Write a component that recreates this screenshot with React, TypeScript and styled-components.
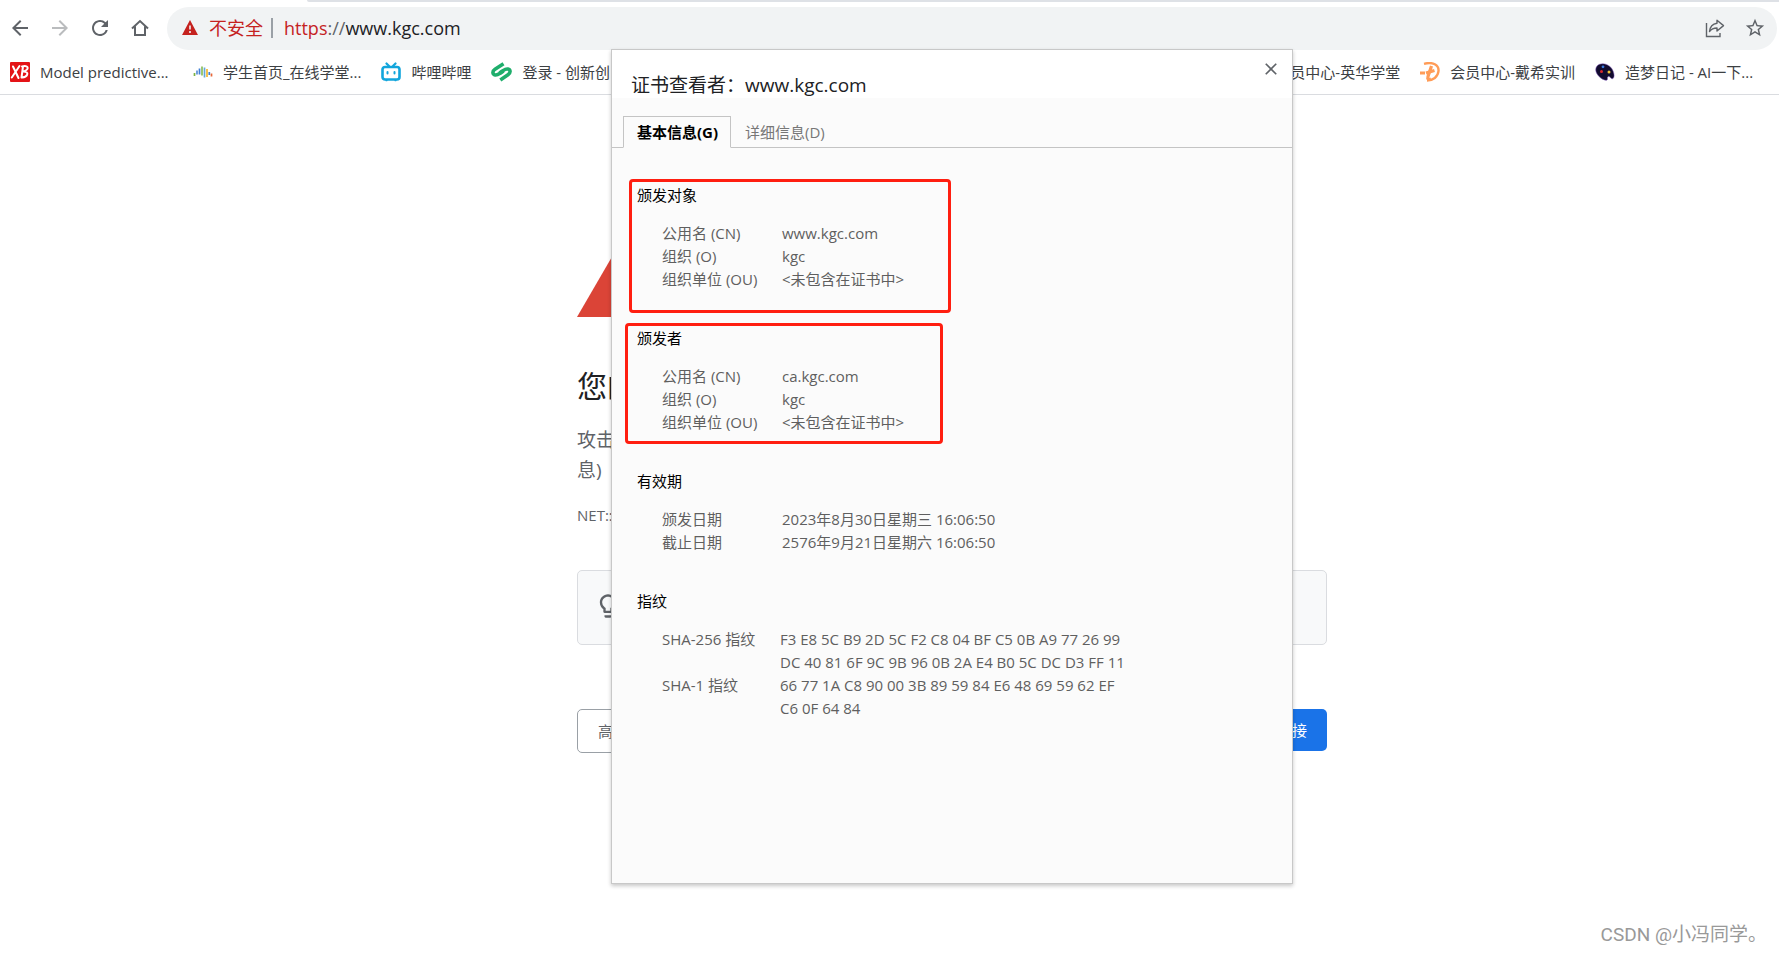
import React from "react";
import styled, { createGlobalStyle } from "styled-components";
import { MdArrowBack, MdArrowForward, MdRefresh, MdStarBorder, MdOutlineLightbulb, MdClose } from "react-icons/md";

const GlobalStyle = createGlobalStyle`
  * { box-sizing: border-box; }
  body {
    margin: 0;
    background: #fff;
    color: #202124;
    font-family: "Open Sans", "Noto Sans CJK SC", sans-serif;
    font-size: 15px;
    line-height: 22px;
    overflow-x: hidden;
  }
  button { font: inherit; cursor: pointer; }
  h1, h2, p, dl, dd { margin: 0; }
`;

const Page = styled.div`
  position: relative;
  min-height: 100vh;
  overflow: hidden;
`;

const TabStrip = styled.div`
  height: 2px;
  margin-left: 307px;
  background: #dee1e6;
  border-bottom-left-radius: 4px;
`;

const Toolbar = styled.header`
  display: flex;
  align-items: flex-start;
  padding: 5px 2px 0 0;
`;

const NavButton = styled.button<{ $dim?: boolean }>`
  display: flex;
  align-items: center;
  justify-content: center;
  width: 40px;
  height: 42px;
  padding: 0;
  border: 0;
  background: none;
  color: ${(p) => (p.$dim ? "#babcbe" : "#5f6368")};
  svg { display: block; }
`;

const Omnibox = styled.div`
  display: flex;
  flex: 1;
  align-items: center;
  height: 43px;
  margin-left: 7px;
  padding: 0 2px 2px 15px;
  border-radius: 22px;
  background: #f1f3f4;
`;

const Unsafe = styled.button`
  display: flex;
  align-items: center;
  gap: 11px;
  padding: 0 8px 0 0;
  border: 0;
  background: none;
  color: #c5221f;
  font-size: 18px;
  line-height: 24px;
`;

const Divider = styled.span`
  width: 2px;
  height: 20px;
  margin-right: 11px;
  background: #9aa0a6;
`;

const Address = styled.div`
  flex: 1;
  font-size: 18px;
  line-height: 24px;
  color: #202124;
  i { font-style: normal; color: #5f6368; }
  b { font-weight: 400; color: #c5221f; }
`;

const Bookmarks = styled.nav`
  display: flex;
  gap: 20px;
  height: 45px;
  padding: 0 21px 0 10px;
  align-items: center;
  border-bottom: 1px solid #dadce0;
`;

const Bookmark = styled.a<{ $push?: boolean }>`
  display: flex;
  gap: 10px;
  align-items: center;
  margin-left: ${(p) => (p.$push ? "auto" : "0")};
  color: #3c4043;
  text-decoration: none;
  white-space: nowrap;
  svg { display: block; }
`;

const BookmarkLabel = styled.span<{ $long?: boolean }>`
  min-width: ${(p) => (p.$long ? "133px" : "0")};
`;

const Main = styled.main`
  display: flex;
  justify-content: center;
  padding: 160px 0 0 125px;
`;

const Warning = styled.section`
  width: 750px;
  color: #5f6368;
`;

const WarningTitle = styled.h1`
  margin-top: 49px;
  color: #202124;
  font-size: 30px;
  font-weight: 400;
  line-height: 40px;
`;

const Lead = styled.p`
  margin-top: 19px;
  font-size: 19px;
  line-height: 30px;
`;

const ErrorCode = styled.p`
  margin-top: 19px;
`;

const Tip = styled.div`
  display: flex;
  align-items: center;
  height: 75px;
  margin-top: 44px;
  padding: 0 16px 4px;
  border: 1px solid #dadce0;
  border-radius: 5px;
  background: #f8f9fa;
`;

const Actions = styled.div`
  display: flex;
  justify-content: space-between;
  align-items: flex-start;
  margin-top: 64px;
`;

const Action = styled.button<{ $primary?: boolean }>`
  height: ${(p) => (p.$primary ? "42px" : "44px")};
  min-width: 72px;
  padding: 0 20px;
  border: ${(p) => (p.$primary ? "0" : "1px solid #9aa0a6")};
  border-radius: 5px;
  background: ${(p) => (p.$primary ? "#1a73e8" : "#fff")};
  color: ${(p) => (p.$primary ? "#fff" : "#5f6368")};
  text-align: ${(p) => (p.$primary ? "right" : "left")};
`;

const Overlay = styled.div`
  position: absolute;
  inset: 0;
  display: flex;
  justify-content: center;
  align-items: flex-start;
  padding: 49px 0 0 125px;
`;

const Dialog = styled.section`
  width: 682px;
  min-height: 835px;
  border: 1px solid #c8c8c8;
  background: #fbfbfb;
  box-shadow: 0 2px 4px rgba(0, 0, 0, 0.22);
`;

const DialogHead = styled.div`
  display: flex;
  justify-content: space-between;
  align-items: flex-start;
  height: 48px;
  padding: 0 11px 0 19px;
  background: #fff;
`;

const DialogTitle = styled.h2`
  padding-top: 22px;
  font-size: 19px;
  font-weight: 400;
  line-height: 26px;
`;

const CloseButton = styled.button`
  display: flex;
  margin-top: 9px;
  padding: 0;
  border: 0;
  background: none;
  color: #5f6368;
`;

const Tabs = styled.div`
  display: flex;
  align-items: flex-end;
  margin-top: 18px;
  padding-left: 11px;
  border-bottom: 1px solid #c4c4c4;
`;

const Tab = styled.button<{ $active?: boolean }>`
  height: 32px;
  margin-bottom: -1px;
  padding: 0 12px 0 13px;
  border: 1px solid ${(p) => (p.$active ? "#c4c4c4" : "transparent")};
  border-bottom-color: ${(p) => (p.$active ? "#fbfbfb" : "transparent")};
  background: ${(p) => (p.$active ? "#fbfbfb" : "none")};
  color: ${(p) => (p.$active ? "#000" : "#777")};
  font-weight: ${(p) => (p.$active ? 700 : 400)};
`;

const Details = styled.div`
  display: flex;
  flex-direction: column;
  gap: 36px;
  padding: 36px 25px;
`;

const Group = styled.section`
  position: relative;
`;

const GroupTitle = styled.h2`
  margin-bottom: 16px;
  color: #000;
  font-size: 15px;
  font-weight: 400;
`;

const Fields = styled.dl<{ $wide?: boolean }>`
  display: grid;
  grid-template-columns: ${(p) => (p.$wide ? "118px" : "120px")} 345px;
  margin-left: 25px;
  color: #5f5f5f;
  line-height: 23px;
`;

const Mark = styled.span<{ $inset: string }>`
  position: absolute;
  inset: ${(p) => p.$inset};
  border: 3px solid #ff1e10;
  border-radius: 4px;
  pointer-events: none;
`;

const Watermark = styled.div`
  position: absolute;
  right: 12px;
  bottom: 5px;
  color: #999;
  font-family: Roboto, "Noto Sans CJK SC", sans-serif;
  font-size: 19px;
  line-height: 26px;
`;

const HomeIcon = () => (
  <svg width="18" height="18" viewBox="0 0 18 18" fill="none" stroke="#5f6368" strokeWidth="2">
    <path d="M1 9.4 9 2l8 7.4M4 7.5V16h10V7.5" />
  </svg>
);

const AlertIcon = () => (
  <svg width="16" height="15" viewBox="0 0 16 15">
    <path d="M8 0 16 15H0Z" fill="#c5221f" />
    <path d="M8 5.5v4M8 11v2" stroke="#f1f3f4" strokeWidth="1.6" />
  </svg>
);

const ShareIcon = () => (
  <svg width="20" height="20" viewBox="0 0 20 20" fill="none" stroke="#5f6368" strokeWidth="1.4">
    <path d="M1.5 5v13.5h13.5V15" />
    <path d="M12 2.2 18.5 7.6 12 13V10c-3.6 0-5.7 1-7.500 3.500C5 9 7.500 5.800 12 5.200Z" strokeLinejoin="round" />
  </svg>
);

const XbLogo = () => (
  <svg width="20" height="20" viewBox="0 0 20 20">
    <rect width="20" height="20" rx="1" fill="#e41417" />
    <g fill="none" stroke="#fff" strokeWidth="2" strokeLinecap="round">
      <path d="M3 4.500 8.500 16M9.500 4 1.800 15.500" />
      <path d="M13 4.500 11.500 15.500M12 4.500c4-1.500 7 .5 5 3-1 1.300-2.500 1.800-4 2 3-.2 5 1 4.200 3.200-.8 2.200-3.200 2.900-5.700 2.800" />
    </g>
  </svg>
);

const WaveLogo = () => (
  <svg width="20" height="20" viewBox="0 0 20 20" strokeWidth="1.7">
    <path d="M1.500 11v3" stroke="#7cb342" />
    <path d="M4 8.500v4" stroke="#5a8fd8" />
    <path d="M6.500 6.500v6" stroke="#3f7fd6" />
    <path d="M9 4.500v9" stroke="#8cbf5a" />
    <path d="M11.500 5.500v10" stroke="#65a9d8" />
    <path d="M14 7v8" stroke="#f5b62e" />
    <path d="M16.300 10v3" stroke="#3f7fd6" />
    <path d="M18.500 11.500v3" stroke="#e8683a" />
  </svg>
);

const BiliLogo = () => (
  <svg width="20" height="20" viewBox="0 0 20 20" fill="none" stroke="#12a5dc" strokeLinecap="round">
    <rect x="1.500" y="5" width="17" height="12.500" rx="2.500" strokeWidth="2.6" />
    <path d="M5.500 1.500 8 4M14.500 1.500 12 4" strokeWidth="2.2" />
    <path d="M6.500 10v1.500M13.500 10v1.500" strokeWidth="2" />
    <path d="M5 18.600h1M14 18.600h1" strokeWidth="1.4" />
  </svg>
);

const LinkLogo = () => (
  <svg width="21" height="20" viewBox="0 0 21 20" fill="none" stroke="#1fae6c" strokeWidth="3.6">
    <path d="M12.500 1.800 4 7.300c-3 2-2.600 5 .2 5.600 2 .4 3.300-.6 5.500-2L12.500 9" />
    <path d="M9.300 18 17 12.700c3-2 2.600-5-.2-5.600-2-.4-3.300.6-5.500 2L8.500 11" />
  </svg>
);

const CoinLogo = () => (
  <svg width="20" height="20" viewBox="0 0 20 20" fill="none" stroke="#ff9c57">
    <path d="M4 1.800c9-2.300 15 1.200 14.500 7.200-.5 6-5.500 9.500-11.500 9.500" strokeWidth="2.400" />
    <path d="M11.500 4 8 14.500c-.8 2.500.5 3.500 3 2.500" strokeWidth="3.2" />
    <path d="M0 11h5M6 11l8.500-2.500" strokeWidth="3.2" />
  </svg>
);

const PaletteLogo = () => (
  <svg width="20" height="20" viewBox="0 0 20 20">
    <path
      d="M2 4C5 .5 12 1 16 5.500c2.500 3 4 8 2.500 10.500-1 1.500-2.500.5-3.200-.5-1-1.500-3-1-2.800.8.200 2-1 2.500-3 1.700C4 16-2 9 2 4Z"
      fill="#120b2e"
      stroke="#8a63c9"
      strokeWidth=".5"
    />
    <circle cx="8" cy="4.800" r="1.400" fill="#3a7be0" />
    <circle cx="6.500" cy="9.500" r="1.500" fill="#d8262c" />
    <circle cx="14" cy="10" r="1.500" fill="#f2c335" />
  </svg>
);

const DangerMark = styled.svg`
  display: block;
`;

const DangerIcon = () => (
  <DangerMark width="72" height="62" viewBox="0 0 72 62">
    <path d="M36 0 72 62H0Z" fill="#db4437" />
    <path d="M37 22v18M37 46v5" stroke="#fff" strokeWidth="4" />
  </DangerMark>
);

type Field = [string, React.ReactNode];
type GroupData = { title: string; mark?: string; wide?: boolean; fields: Field[] };

const groups: GroupData[] = [
  {
    title: "颁发对象",
    mark: "-5px 316px -22px -8px",
    fields: [
      ["公用名 (CN)", "www.kgc.com"],
      ["组织 (O)", "kgc"],
      ["组织单位 (OU)", "<未包含在证书中>"],
    ],
  },
  {
    title: "颁发者",
    mark: "-4px 324px -10px -12px",
    fields: [
      ["公用名 (CN)", "ca.kgc.com"],
      ["组织 (O)", "kgc"],
      ["组织单位 (OU)", "<未包含在证书中>"],
    ],
  },
  {
    title: "有效期",
    fields: [
      ["颁发日期", "2023年8月30日星期三 16:06:50"],
      ["截止日期", "2576年9月21日星期六 16:06:50"],
    ],
  },
  {
    title: "指纹",
    wide: true,
    fields: [
      ["SHA-256 指纹", <>F3 E8 5C B9 2D 5C F2 C8 04 BF C5 0B A9 77 26 99<br />DC 40 81 6F 9C 9B 96 0B 2A E4 B0 5C DC D3 FF 11</>],
      ["SHA-1 指纹", <>66 77 1A C8 90 00 3B 89 59 84 E6 48 69 59 62 EF<br />C6 0F 64 84</>],
    ],
  },
];

const bookmarks = [
  { label: "Model predictive...", icon: <XbLogo />, long: true },
  { label: "学生首页_在线学堂...", icon: <WaveLogo />, long: true },
  { label: "哔哩哔哩", icon: <BiliLogo /> },
  { label: "登录 - 创新创", icon: <LinkLogo /> },
  { label: "员中心-英华学堂", push: true },
  { label: "会员中心-戴希实训", icon: <CoinLogo /> },
  { label: "造梦日记 - AI一下...", icon: <PaletteLogo />, long: true },
];

export default function App() {
  return (
    <Page>
      <GlobalStyle />
      <TabStrip />
      <Toolbar>
        <NavButton aria-label="后退"><MdArrowBack size={24} /></NavButton>
        <NavButton aria-label="前进" $dim><MdArrowForward size={24} /></NavButton>
        <NavButton aria-label="刷新"><MdRefresh size={24} /></NavButton>
        <NavButton aria-label="主页"><HomeIcon /></NavButton>
        <Omnibox>
          <Unsafe><AlertIcon />不安全</Unsafe>
          <Divider />
          <Address><b>https</b><i>://</i>www.kgc.com</Address>
          <NavButton aria-label="分享"><ShareIcon /></NavButton>
          <NavButton aria-label="收藏"><MdStarBorder size={22} /></NavButton>
        </Omnibox>
      </Toolbar>
      <Bookmarks>
        {bookmarks.map((b) => (
          <Bookmark key={b.label} href="#" $push={b.push}>
            {b.icon}
            <BookmarkLabel $long={b.long}>{b.label}</BookmarkLabel>
          </Bookmark>
        ))}
      </Bookmarks>
      <Main>
        <Warning>
          <DangerIcon />
          <WarningTitle>您的</WarningTitle>
          <Lead>攻击<br />息)</Lead>
          <ErrorCode>NET::</ErrorCode>
          <Tip><MdOutlineLightbulb size={28} /></Tip>
          <Actions>
            <Action>高</Action>
            <Action $primary>接</Action>
          </Actions>
        </Warning>
      </Main>
      <Overlay>
        <Dialog role="dialog" aria-labelledby="certificate-title">
          <DialogHead>
            <DialogTitle id="certificate-title">证书查看者：www.kgc.com</DialogTitle>
            <CloseButton aria-label="关闭"><MdClose size={20} /></CloseButton>
          </DialogHead>
          <Tabs role="tablist">
            <Tab role="tab" aria-selected="true" $active>基本信息(G)</Tab>
            <Tab role="tab" aria-selected="false">详细信息(D)</Tab>
          </Tabs>
          <Details>
            {groups.map((g) => (
              <Group key={g.title}>
                <GroupTitle>{g.title}</GroupTitle>
                <Fields $wide={g.wide}>
                  {g.fields.map(([name, value]) => (
                    <React.Fragment key={name}>
                      <dt>{name}</dt>
                      <dd>{value}</dd>
                    </React.Fragment>
                  ))}
                </Fields>
                {g.mark && <Mark $inset={g.mark} />}
              </Group>
            ))}
          </Details>
        </Dialog>
      </Overlay>
      <Watermark>CSDN @小冯同学。</Watermark>
    </Page>
  );
}
